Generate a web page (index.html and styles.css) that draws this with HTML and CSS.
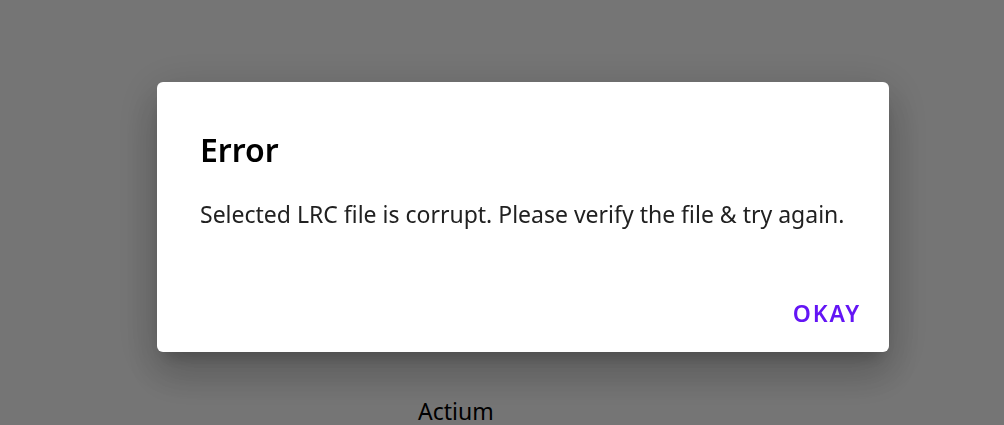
FILE: index.html
```html
<!DOCTYPE html>
<html lang="en">
<head>
  <meta charset="UTF-8" />
  <meta name="viewport" content="width=device-width, initial-scale=1.0"/>
  <title>Error</title>
  <link rel="stylesheet" href="styles.css">
</head>
<body>
  <div class="page">
    <div class="app-name">Actium</div>
  </div>

  <div class="scrim">
    <div class="dialog" role="alertdialog">
      <h2 class="dialog-title">Error</h2>
      <p class="dialog-text">Selected LRC file is corrupt. Please verify the file &amp; try again.</p>
      <div class="dialog-actions">
        <button class="text-button">OKAY</button>
      </div>
    </div>
  </div>
</body>
</html>
```

FILE: styles.css
```css
body {
  margin: 0;
  font-family: 'Noto Sans', 'Open Sans', sans-serif;
  background: #fff;
  height: 100vh;
  overflow: hidden;
}

.page {
  padding: 395px 0 0 418px;
}

.app-name {
  font-size: 23px;
  color: #000;
  line-height: 32px;
}

.scrim {
  position: fixed;
  inset: 0;
  background: rgba(0, 0, 0, 0.54);
  display: flex;
  align-items: flex-start;
  padding: 82px 0 0 157px;
}

.dialog {
  width: 732px;
  height: 270px;
  box-sizing: border-box;
  background: #fff;
  border-radius: 6px;
  padding: 0 29px 0 43px;
  display: flex;
  flex-direction: column;
  box-shadow: 0 11px 15px -7px rgba(0,0,0,0.2),
              0 24px 38px 3px rgba(0,0,0,0.14),
              0 9px 46px 8px rgba(0,0,0,0.12);
}

.dialog-title {
  margin: 46px 0 0;
  font-size: 32px;
  font-weight: 600;
  line-height: 44px;
  color: #000;
}

.dialog-text {
  margin: 26px 0 0;
  font-size: 23px;
  line-height: 32px;
  color: #212121;
}

.dialog-actions {
  margin-top: auto;
  display: flex;
  justify-content: flex-end;
  padding-bottom: 24px;
}

.text-button {
  font-family: inherit;
  font-size: 23px;
  font-weight: 600;
  letter-spacing: 1.8px;
  color: #6415f5;
  background: none;
  border: none;
  padding: 0;
  margin-right: -1px;
  line-height: 30px;
  cursor: pointer;
}
```
